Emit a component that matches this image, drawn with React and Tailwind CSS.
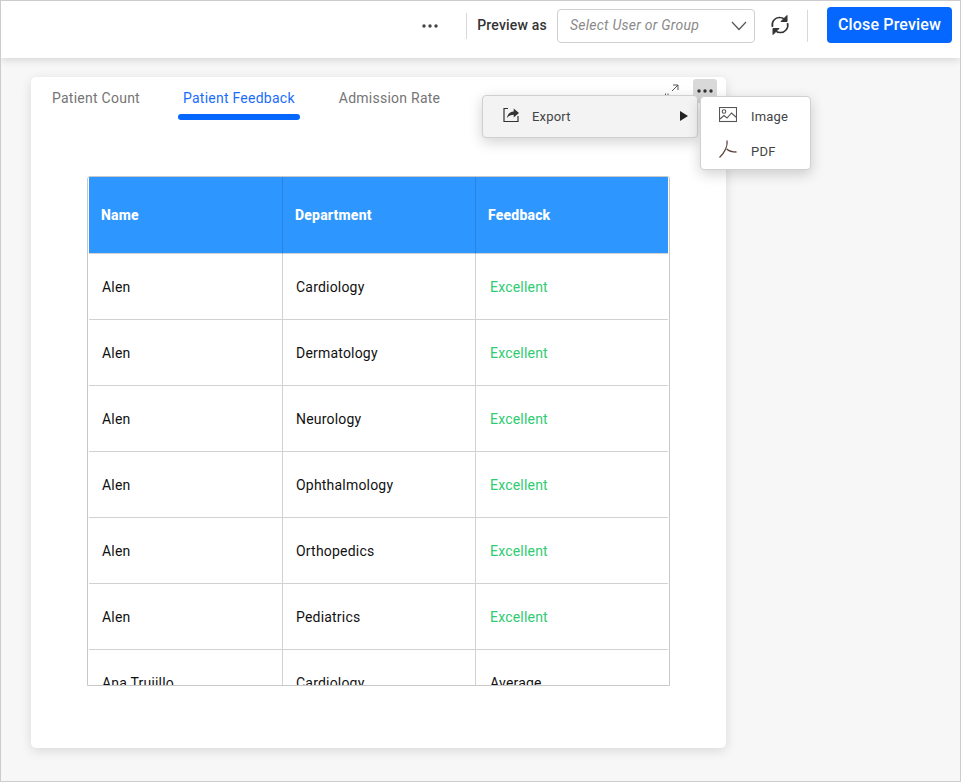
const rows = [
  ["Alen", "Cardiology", "Excellent"],
  ["Alen", "Dermatology", "Excellent"],
  ["Alen", "Neurology", "Excellent"],
  ["Alen", "Ophthalmology", "Excellent"],
  ["Alen", "Orthopedics", "Excellent"],
  ["Alen", "Pediatrics", "Excellent"],
  ["Ana Trujillo", "Cardiology", "Average"],
];

function Dots({ className }) {
  return (
    <svg width="18" height="4" viewBox="0 0 18 4" className={className} fill="currentColor">
      <circle cx="3" cy="2" r="1.7" />
      <circle cx="9" cy="2" r="1.7" />
      <circle cx="15" cy="2" r="1.7" />
    </svg>
  );
}

function Cell({ children, className = "", last }) {
  return (
    <div className={`h-[66px] flex items-center pt-px border-b border-[#d2d2d2] text-[14px] tracking-[0.2px] ${last ? "pl-[14px]" : "pl-[13px] border-r"} ${className}`}>
      {children}
    </div>
  );
}

export default function App() {
  return (
    <div className="relative w-[961px] h-[782px] overflow-hidden bg-[#f7f7f7] border border-[#cccccc] font-['Roboto',sans-serif] text-[#333]">
      <header className="h-[57px] pb-[8px] bg-white shadow-[0_2px_8px_rgba(0,0,0,0.14)] flex items-center justify-end relative">
        <Dots className="text-[#444] mr-[27px]" />
        <div className="w-px h-[26px] bg-[#d8d8d8] mr-[10px]" />
        <span className="text-[14px] font-medium text-[#333] mr-[10px] tracking-[0.2px]">Preview as</span>
        <div className="w-[198px] h-[34px] border border-[#cfcfcf] rounded-[4px] flex items-center justify-between pl-[12px] pr-[7px] mr-[15px]">
          <span className="italic text-[14px] text-[#8a8a8a] tracking-[0.25px]">Select User or Group</span>
          <svg width="16" height="10" viewBox="0 0 16 10" fill="none" stroke="#555" strokeWidth="1.2"><path d="M1 1l7 7.5L15 1" /></svg>
        </div>
        <svg width="20" height="22" viewBox="0 0 20 22" fill="none" stroke="#333" strokeWidth="1.6" className="mr-[17px] -mt-[2px]">
          <path d="M2.500 13C1 7.500 5.500 3 10 3.500c2.500 0 4 1 5.500 2.500" />
          <path d="M17.500 9C19 14.500 14.500 19 10 18.500c-2.500 0-4-1-5.500-2.500" />
          <path d="M17 1.500v6h-6z" fill="#333" strokeWidth="1" />
          <path d="M3 20.500v-6h6z" fill="#333" strokeWidth="1" />
        </svg>
        <div className="w-px h-[32px] bg-[#d8d8d8] mr-[19px]" />
        <button className="w-[125px] h-[36px] bg-[#0567fe] rounded-[4px] text-white text-[16px] font-medium tracking-[0.15px] mr-[8px] -mt-[2px]">Close Preview</button>
      </header>

      <main className="absolute left-[30px] top-[76px] w-[695px] h-[671px] bg-white rounded-[5px] shadow-[0_3px_12px_rgba(0,0,0,0.12)]">
        <nav className="flex h-[45px] pl-[15px] text-[14px] font-normal tracking-[0.25px]">
          <div className="px-[6px] pt-[11px] text-[#757575] mr-[31px]">Patient Count</div>
          <div className="relative px-[6px] pt-[11px] text-[#1a6cfb] mr-[32px]">
            Patient Feedback
            <div className="absolute left-px right-[1px] top-[37px] h-[6px] rounded-[3px] bg-[#0567fe]" />
          </div>
          <div className="px-[6px] pt-[11px] text-[#757575]">Admission Rate</div>
        </nav>

        <div className="absolute left-[56px] top-[99px] w-[583px] h-[510px] pl-px border border-[#c8c8c8] rounded-t-[3px] overflow-hidden">
          <div className="grid grid-cols-[194px_193px_192px]">
            <div className="h-[77px] bg-[#2e97ff] border-r border-[#2a84dc] border-b border-b-[#d2d2d2] flex items-center pl-[12px] text-white text-[14px] font-extrabold tracking-[0.2px]">Name</div>
            <div className="h-[77px] bg-[#2e97ff] border-r border-[#2a84dc] border-b border-b-[#d2d2d2] flex items-center pl-[12px] text-white text-[14px] font-extrabold tracking-[0.2px]">Department</div>
            <div className="h-[77px] bg-[#2e97ff] border-b border-b-[#d2d2d2] flex items-center pl-[12px] text-white text-[14px] font-extrabold tracking-[0.2px]">Feedback</div>
            {rows.map((r, i) => (
              <div key={i} className="contents">
                <Cell className="text-[#111]">{r[0]}</Cell>
                <Cell className="text-[#111]">{r[1]}</Cell>
                <Cell last className={r[2] === "Excellent" ? "text-[#2ecc71]" : "text-[#111]"}>{r[2]}</Cell>
              </div>
            ))}
          </div>
        </div>

        <svg width="16" height="16" viewBox="0 0 16 16" fill="none" stroke="#555" strokeWidth="1" className="absolute left-[632px] top-[6px]">
          <path d="M10 2h5v5M15 2L9 8" />
          <path d="M2.500 10.500v3M5 10.500v3" />
        </svg>
        <div className="absolute left-[662px] top-[2px] w-[24px] h-[24px] rounded-[3px] bg-[#d9d9d9] flex items-center justify-center">
          <Dots className="text-[#333]" />
        </div>
      </main>

      <div className="absolute left-[481px] top-[94px] w-[216px] h-[43px] bg-[#f3f3f3] border border-[#d0d0d0] rounded-[4px] shadow-[0_4px_14px_rgba(0,0,0,0.18)] flex items-center text-[13px] text-[#444]">
        <svg width="16" height="16" viewBox="0 0 16 16" className="ml-[20px] mr-[13px] -mt-[3px]" fill="none" stroke="#333" strokeWidth="1.2">
          <path d="M5 1.500H1v13h14V9" />
          <path d="M4 11c.3-3.500 3-6.300 6.700-6.500V1.500L16 6l-5.300 4.500V7.700C8 7.700 5.500 8.800 4 11z" fill="#333" stroke="none" />
        </svg>
        <span className="tracking-[0.2px]">Export</span>
        <svg width="8" height="10" viewBox="0 0 8 10" className="absolute right-[9px] top-[15px]" fill="#222"><path d="M0 0l8 5-8 5z" /></svg>
      </div>

      <div className="absolute left-[699px] top-[95px] w-[111px] h-[74px] bg-white border border-[#d0d0d0] rounded-[4px] shadow-[0_4px_14px_rgba(0,0,0,0.18)] text-[13px] text-[#444] tracking-[0.2px]">
        <div className="flex items-center h-[35px] pl-[18px] mt-[2px]">
          <svg width="18" height="16" viewBox="0 0 18 16" fill="none" stroke="#555" strokeWidth="1.1" className="mr-[14px] -mt-[3px]">
            <rect x="0.500" y="0.500" width="17" height="14" />
            <circle cx="5" cy="4.500" r="1.800" />
            <path d="M1 12l4-3.500 3 2.500 4.500-5 5 4.500" />
          </svg>
          Image
        </div>
        <div className="flex items-center h-[35px] pl-[18px]">
          <svg width="18" height="18" viewBox="0 0 18 18" fill="none" stroke="#5f4640" strokeWidth="1.3" className="mr-[14px] -mt-[5px]">
            <path d="M8 0.500c1 5-2 12-7.500 17M7.800 9c2 2 5.200 3 9.700 3" />
          </svg>
          PDF
        </div>
      </div>
    </div>
  );
}
